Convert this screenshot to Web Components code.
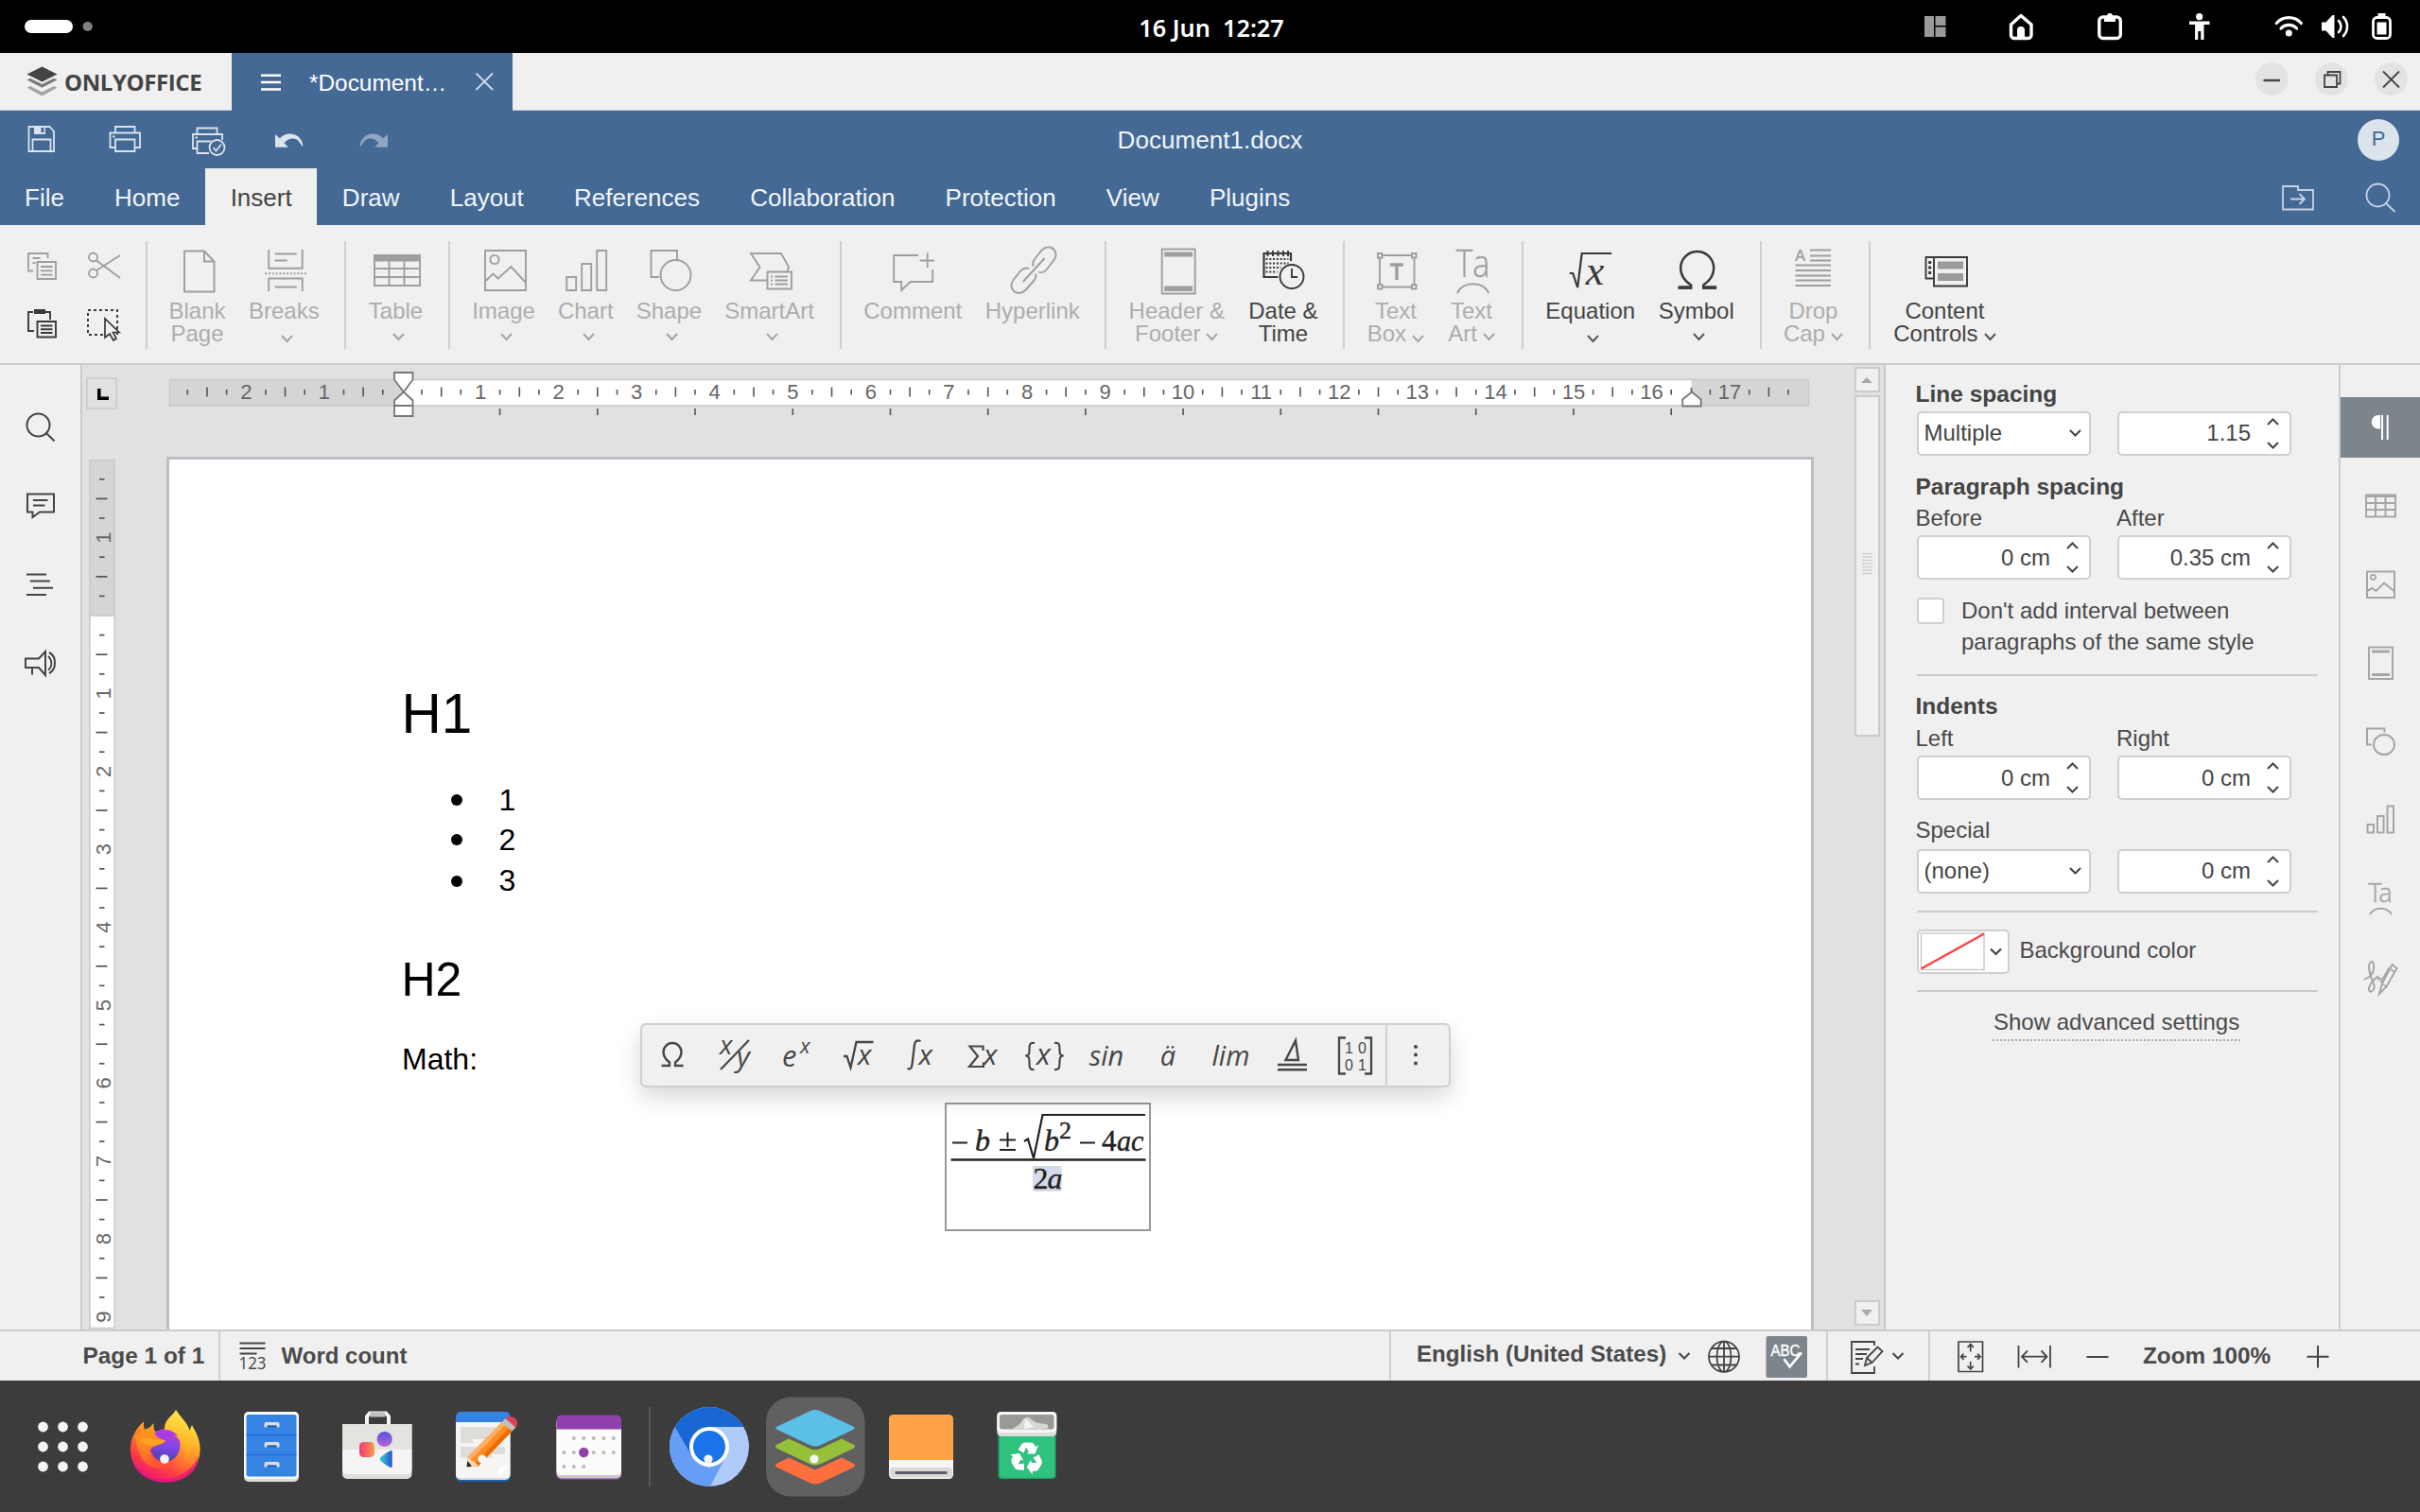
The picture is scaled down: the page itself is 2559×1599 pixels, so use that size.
<!DOCTYPE html>
<html lang="en">
<head>
<meta charset="utf-8">
<title>Document1.docx</title>
<style>
html,body{margin:0;height:100%;overflow:hidden;background:#f0f0f0}
body{font-family:"Liberation Sans",Arial,sans-serif}
</style>
</head>
<body>
<office-desktop></office-desktop>
<script>
/* ---------- helpers ---------- */
const define = (name, css, html) => customElements.define(name, class extends HTMLElement {
  constructor() {
    super();
    const body = typeof html === 'function' ? html(this) : html;
    this.attachShadow({mode: 'open'}).innerHTML = `<style>*{box-sizing:border-box}:host{display:block;box-sizing:border-box}svg{display:block;overflow:visible;flex:none}${css}</style>${body}`;
  }
});
/* horizontal run: items are [x, y, width, html], spaced with margins */
const row = (x0, y0, items) => {
  let c = x0;
  return items.map(([x, y, w, h]) => {
    const s = `<div style="flex:none;margin:${(y - y0).toFixed(2)}px 0 0 ${(x - c).toFixed(2)}px;width:${w}px">${h}</div>`;
    c = x + w; return s;
  }).join('');
};
/* vertical run: items are [y, height, html] */
const col = (y0, items) => {
  let c = y0;
  return items.map(([y, h, s]) => {
    const r = `<div style="margin-top:${(y - c).toFixed(2)}px;height:${h}px">${s}</div>`;
    c = y + h; return r;
  }).join('');
};
const svg = (x, y, w, h, body, color = '#444', sw = 2) =>
  `<svg width="${w}" height="${h}" viewBox="${x} ${y} ${w} ${h}" fill="none" stroke="${color}" stroke-width="${sw}">${body}</svg>`;
const icon = (x, y, w, h, body, color, sw) => [x, y, w, svg(x, y, w, h, body, color, sw)];
/* text line placed by baseline */
const text = (x, base, w, size, str, css = '') =>
  [x, base - size * .9465, w, `<div style="font-size:${size}px;line-height:${size * 1.2}px;white-space:pre;${css}">${str}</div>`];
const chev = (cx, cy, s = 5.5, up = false) => up
  ? `<path d="M${cx - s} ${cy + 3}l${s} -5.5l${s} 5.5"/>` : `<path d="M${cx - s} ${cy - 3}l${s} 5.5l${s} -5.5"/>`;

/* ---------- system bar ---------- */
define('system-bar', `:host{height:56px;background:#000;display:flex;align-items:flex-start;color:#fff}`, row(0, 0, [
  icon(26, 21, 51, 14, `<rect x="26" y="21" width="51" height="14" rx="7" fill="#fff" stroke="none"/>`),
  icon(87, 23, 11, 10, `<ellipse cx="92.7" cy="28" rx="5.2" ry="5" fill="#808080" stroke="none"/>`),
  [1181, 12.5, 200, `<div style="font:600 25.3px/32px 'Noto Sans','Open Sans',sans-serif;text-align:center;white-space:pre">16 Jun  12:27</div>`],
  icon(2035, 17, 23, 22, `<g fill="#9a9a9a" stroke="none"><path d="M2035 17h10v22h-10z"/><path d="M2046.500 17h11v10h-11zM2046.500 28.500h11v10.500h-11z"/></g>`),
  icon(2124, 14, 26, 29, `<path d="M2126.500 26L2137 16.500 2148 26V37a3.500 3.500 0 0 1-3.500 3.500h-14.500a3.500 3.500 0 0 1-3.500-3.500z" stroke-linejoin="round"/><path d="M2133 40.500V32a4 4 0 0 1 8 0v8.500z" fill="#fff" stroke="none"/>`, '#fff', 3.4),
  icon(2218, 14, 26, 29, `<rect x="2219.800" y="18" width="22.500" height="22.500" rx="4"/><path d="M2225 23v-4a2 2 0 0 1 2-2h1a3 3 0 0 1 6 0h1a2 2 0 0 1 2 2v4z" fill="#fff" stroke="none"/>`, '#fff', 3.4),
  icon(2314, 14, 23, 29, `<circle cx="2325.700" cy="17.700" r="3.600" fill="#fff" stroke="none"/><path d="M2315 22.500h21.500v3.500h-6v16h-3.200v-9h-3v9h-3.200v-16h-6z" fill="#fff" stroke="none"/>`),
  icon(2405, 16, 30, 23, `<path d="M2407.300 24.500a17.500 17.500 0 0 1 26 0M2412 30a11.500 11.500 0 0 1 16.600 0" stroke-linecap="round"/><circle cx="2420.300" cy="35" r="3.500" fill="#fff" stroke="none"/>`, '#fff', 3.2),
  icon(2454, 16, 30, 24, `<path d="M2455 23.500h4.500l7-7.500h2v24h-2l-7-7.500h-4.500z" fill="#fff" stroke="none"/><path d="M2473 22a8.500 8.500 0 0 1 0 12M2478 18a14.500 14.500 0 0 1 0 20" stroke-linecap="round"/>`, '#fff', 2.6),
  icon(2508, 14, 21, 28, `<rect x="2509.500" y="18.500" width="18" height="22" rx="4"/><path d="M2514.500 18v-4h8v4zM2513.500 23.500h10v13h-10z" fill="#fff" stroke="none"/>`, '#fff', 2.8),
]));

/* ---------- window title bar with document tab ---------- */
define('window-bar', `:host{height:61px;background:#f0f0f0;display:flex;align-items:flex-start;border-bottom:1px solid #c9d3de}
.tab{display:flex;align-items:flex-start;width:297.500px;height:61px;background:#446995;color:#fff}`, row(0, 56, [
  icon(28, 70, 33, 32, `<g stroke="none"><path d="M44.500 70.500L60.500 78.500 44.500 86.500 28.500 78.500z" fill="#444"/><path d="M28.500 84.500l3.500-1.800 12.500 6.200 12.500-6.200 3.500 1.800-16 8.200z" fill="#7b7b7b"/><path d="M28.500 92.800l3.500-1.800 12.500 6.200 12.500-6.200 3.500 1.800-16 8.700z" fill="#a5a5a5"/></g>`),
  text(68, 95.5, 150, 24, 'ONLYOFFICE', `font-family:'Open Sans',sans-serif;font-weight:700;color:#444;letter-spacing:-.4px`),
  [244.5, 56, 297.5, `<div class="tab">` + row(244.5, 56, [
    icon(276, 78, 21, 18, `<path d="M276 79.700h21M276 87h21M276 94.500h21"/>`, '#fff', 2.4),
    text(327, 96.5, 160, 24.4, '*Document…'),
    icon(503, 77, 19, 19, `<path d="M503.500 77.500l17.500 17.500M521 77.500L503.500 95"/>`, '#d5deea', 1.8),
  ]) + `</div>`],
  icon(2384, 66, 36, 36, `<circle cx="2402.300" cy="83.700" r="17.500" fill="#e3e3e3" stroke="none"/><path d="M2393.500 85h17.500"/>`, '#444', 2.4),
  icon(2447, 66, 36, 36, `<circle cx="2465.300" cy="83.700" r="17.500" fill="#e3e3e3" stroke="none"/><path d="M2458 79.500h13v12.500h-13zM2461.500 79.500v-3.500h13v12.500h-3.500"/>`, '#444', 1.8),
  icon(2510, 66, 36, 36, `<circle cx="2528.300" cy="83.700" r="17.500" fill="#e3e3e3" stroke="none"/><path d="M2520 75.500l17 17M2537 75.500l-17 17"/>`, '#444', 1.8),
]));

/* ---------- blue header ---------- */
define('app-header', `:host{height:121px;background:#446995;color:#f1f5f9}
.quick,.tabs{display:flex;align-items:flex-start}.quick{height:61px}.tabs{height:60px;font-size:26px;line-height:60px;padding-right:0}
.tabs span{padding:9px 26.600px 0;line-height:44px;height:60px;white-space:pre}.tabs span:first-child{padding-left:26px}
.tabs .on{background:#f0f0f0;color:#444}.ico{flex:1;display:flex;align-items:flex-start;justify-content:flex-end;gap:55px;padding:14px 26px 0 0}
.av{width:44px;height:44px;border-radius:50%;background:#dbe3ed;color:#446995;font-size:22px;line-height:42px;text-align:center}`,
`<div class="quick">` + row(0, 117, [
  icon(29, 132, 30, 30, `<path d="M30.500 134h22l4.500 5v21h-26.500z"/><path d="M36 134h12v8h-12z" fill="#dbe3ed" stroke="none"/><path d="M43.500 135h3v5h-3z" fill="#446995" stroke="none"/><path d="M34.500 160v-12.500h19V160"/>`, '#dbe3ed', 1.8),
  icon(115, 132, 35, 30, `<path d="M122 140.500v-6.500h20.500v6.500M122 156h-5.500v-15.500h31.500V156h-5.500M122 147.500h20.500V160H122z"/><path d="M119 143.500h2.500v2h-2.500z" fill="#dbe3ed" stroke="none"/>`, '#dbe3ed', 1.8),
  icon(203, 134, 37, 32, `<path d="M208.500 142v-6.500h21v6.500M208.500 157h-4.500v-15h31V148M221 162h-12.500v-12.500h15"/><path d="M206.500 144.500h2.500v2h-2.500z" fill="#dbe3ed" stroke="none"/><circle cx="229.500" cy="156" r="8"/><path d="M225.500 156l3 3.500 5.500-7"/>`, '#dbe3ed', 1.8),
  icon(291, 141, 30, 15, `<path d="M291 142v13.700h14l-4.500-4.500c4-5 12-7 16-1 1.500 2 2.500 4 4 5C320 145 312 141 305.500 141.500c-4 .3-8 2.500-9.500 5z" fill="#dbe3ed" stroke="none"/>`),
  icon(380, 141, 30, 15, `<path d="M410 142v13.700h-14l4.500-4.500c-4-5-12-7-16-1-1.500 2-2.500 4-4 5C381 145 389 141 395.500 141.500c4 .3 8 2.500 9.500 5z" fill="#8fa5c0" stroke="none"/>`),
  text(1129.5, 157.5, 300, 26.1, 'Document1.docx', 'text-align:center'),
  [2493, 125.7, 44, `<div class="av">P</div>`],
]) + `</div><div class="tabs"><span>File</span><span>Home</span><span class="on">Insert</span><span>Draw</span><span>Layout</span><span>References</span><span>Collaboration</span><span>Protection</span><span>View</span><span>Plugins</span>
<div class="ico">${svg(2413, 192, 34, 32, `<path d="M2414 197h16v4h16v20.500h-32z"/><path d="M2422 210.500h14M2431.500 205l5.500 5.500-5.500 5.500"/>`, '#c7d3e1', 1.8)}${svg(2502, 192, 31, 32, `<circle cx="2514.500" cy="206.500" r="12"/><path d="M2523 215l9.500 9"/>`, '#c7d3e1', 1.8)}</div></div>`);

/* ---------- ribbon ---------- */
const G = '#9e9e9e', K = '#3a3a3a', BL = 255;
define('ribbon-button', `:host{text-align:center;font-size:24px;line-height:24.400px;white-space:nowrap;color:#adadad;height:115px}
:host([on]){color:#444}.l{margin:0 -20px 0 -21px}`, `<slot name="icon"></slot><div class="l"><slot></slot></div>`);
const cv = (dy, c) => `<svg width="13" height="8" viewBox="0 0 13 8" fill="none" stroke="${c}" stroke-width="2" style="display:inline-block;margin-left:6px;vertical-align:${dy}px"><path d="M1 1l5.500 6L12 1"/></svg>`;
const rb = (cx, w, label, art, on) => [cx - w / 2, BL, w,
  `<ribbon-button ${on ? 'on' : ''}><svg slot="icon" style="display:block;overflow:visible" width="${w}" height="62" viewBox="${cx - w / 2} 255 ${w} 62" fill="none" stroke="${on ? K : G}" stroke-width="1.9">${art}</svg>${label}</ribbon-button>`];
const sep = x => [x - 1, 255, 2, `<div class="sep"></div>`];
define('tool-ribbon', `:host{height:148px;background:#f0f0f0;border-bottom:2px solid #cbcbcb;display:flex;align-items:flex-start}
.sep{height:114px;background:#cfcfcf}`, row(0, 238, [
  [28, 266, 34, col(266, [
    [266, 31, svg(28, 266, 34, 31, `<path d="M35 286.500h-5v-18.500h20.500v5M34.500 273h8M34.500 278h3"/><path d="M39.500 277h19.500v18h-19.500zM43 282h12.500M43 286.300h12.500M43 290.600h12.500"/>`, G, 1.8)],
    [326, 32, svg(28, 326, 34, 32, `<path d="M36 350h-6V330h5M48 330h5v8"/><path d="M36 327h12v5h-12z" fill="${K}" stroke="none"/><path d="M39.500 340h19.500v16.500h-19.500zM43 344.500h12.500M43 348.300h12.500M43 352h12.500"/>`, K, 1.9)]])],
  [92, 266, 37, col(266, [
    [266, 31, svg(92, 266, 37, 31, `<circle cx="98.500" cy="272" r="4.500"/><circle cx="98.500" cy="289" r="4.500"/><path d="M102 275.500L127 294M102 286L127 270"/>`, G, 1.8)],
    [326, 35, svg(92, 326, 37, 35, `<path d="M93 328h31v26h-31z" stroke-dasharray="3 3"/><path d="M111 337v20l5-4 4 7 3-2-3.500-6.500h6.500z" fill="#f0f0f0" stroke-width="1.700"/>`, K, 2)]])],
  sep(155),
  rb(209, 60, 'Blank<br>Page', `<path d="M195 265.500h21l10.500 11v32h-31.500zM216 265.500v11h10.500"/>`),
  rb(300.8, 76, `Breaks<br>${cv(-1, '#a5a5a5')}`, `<path d="M284 264v19.800h35.500V264M290.500 268.500h23M290.500 275.500h13M284 308v-13.500h35.500V308M290.500 303.500h23"/><path d="M280 289.300h44" stroke-dasharray="2 1.800"/>`),
  sep(365),
  rb(419, 60, `Table<br>${cv(1, '#a5a5a5')}`, `<path d="M396 270h48v32h-48zM396 284h48M396 293h48M411.500 276v26M427.500 276v26"/><path d="M395.500 269.500h49v7h-49z" fill="${G}" stroke="none"/>`),
  sep(475.5),
  rb(533, 70, `Image<br>${cv(1, '#a5a5a5')}`, `<path d="M513 265h43v42h-43zM513 297.500l8.500-8 5 5 14-12.500 15.500 17"/><circle cx="523" cy="274.500" r="4.600"/>`),
  rb(619.8, 66, `Chart<br>${cv(1, '#a5a5a5')}`, `<path d="M599 293h10v14h-10zM615 279h10v28h-10zM631 265h10v42h-10z"/>`),
  rb(708, 76, `Shape<br>${cv(1, '#a5a5a5')}`, `<path d="M697 293h-8.500v-28h27.500v9"/><circle cx="714.500" cy="291" r="16"/>`),
  rb(814, 96, `SmartArt<br>${cv(1, '#a5a5a5')}`, `<path d="M811 296.500h-17l9.500-14-9.500-14.500h32l8 14-1.500 5"/><path d="M811.500 287.500h25.500v18h-25.500zM819.500 292.500h13.500M819.500 296.500h13.500M819.500 300.500h13.500M815 292.500h2M815 296.500h2M815 300.500h2"/>`),
  sep(889),
  rb(965.8, 106, 'Comment', `<path d="M971 270h-26v28h8v9l9.500-9H986V285"/><path d="M980.500 267.500v15.500M972.500 275.500h15.500"/>`),
  rb(1092.3, 102, 'Hyperlink', `<path d="M1092.500 281.500C1092 277 1093 275.500 1095 273L1102 264.500C1107 259.500 1114 261 1116 266 1118 270 1116.500 273 1114 276L1107 285C1104.500 288 1102 289 1098.500 287.500"/><path d="M1088.500 284C1084 282.500 1081.500 284 1079 287L1072 296C1069 300 1069 304 1072 307.500 1076 311 1081 310.500 1085 306.500L1093 297.500C1096 294 1096.500 292 1095.500 289.500M1082 298L1105 273"/>`),
  sep(1169),
  rb(1244.8, 104, `Header &amp;<br>Footer${cv(1, '#a5a5a5')}`, `<path d="M1228.500 263.500h35v47h-35z"/><path d="M1231 266.500h30v5h-30zM1231 302.500h30v5.500h-30z" fill="${G}" stroke="none"/>`),
  rb(1357.5, 76, `Date &amp;<br>Time`, `<path d="M1352 293h-15v-25h28.500v8" stroke-width="2.200"/><path d="M1341 265v6M1346.500 265v6M1352 265v6M1357.500 265v6M1362.500 265v6"/><path d="M1339 274h24M1339 278.500h24M1339 283h16M1339 287.500h12" stroke-dasharray="2 1.800" stroke-width="2"/><circle cx="1366.500" cy="292.500" r="12.500"/><path d="M1366.500 284v9h6"/>`, 1),
  sep(1421),
  rb(1476.5, 64, `Text<br>Box${cv(-1, '#a5a5a5')}`, `<path d="M1462 270h31M1462 303.500h31M1459.500 273v28M1496 273v28M1457.500 268h4.500v4.500h-4.500zM1493.500 268h4.500v4.500h-4.500zM1457.500 301h4.500v4.500h-4.500zM1493.500 301h4.500v4.500h-4.500z"/><path d="M1470.500 280h14M1477.500 280v16" stroke-width="3.400"/>`),
  rb(1556.6, 62, `Text<br>Art${cv(1, '#a5a5a5')}`, `<text x="1557" y="293" text-anchor="middle" font-family="Open Sans,Noto Sans,sans-serif" font-weight="300" font-size="40" textLength="36" lengthAdjust="spacingAndGlyphs" fill="${G}" stroke="${G}" stroke-width=".4">Ta</text><path d="M1540.500 310c6-13 27-13 33.500 0"/>`),
  sep(1610),
  rb(1682.3, 100, `Equation<br>${cv(-1, '#555')}`, `<path d="M1660 289h3.500l5 15 4.500-36h31.500" stroke-width="2.200"/><text x="1677" y="301" font-family="Liberation Serif,serif" font-style="italic" font-size="44" fill="${K}" stroke="none">x</text>`, 1),
  rb(1794.3, 90, `Symbol<br>${cv(1, '#555')}`, `<path d="M1775 304.500h13.500v-3c-6-4-11-9-11-18a17.500 17.500 0 0 1 35 0c0 9-5 14-11 18v3h13.500" stroke-width="2.500"/><path d="M1775 304h14M1800.500 304h15" stroke-width="3.600"/>`, 1),
  sep(1862),
  rb(1918, 66, `Drop<br>Cap${cv(1, '#a5a5a5')}`, `<path d="M1914 264.500h22M1914 270.500h22M1914 275.500h22M1898.500 280.500h37.500M1898.500 286h37.500M1898.500 291.500h37.500M1898.500 296.500h37.500M1898.500 302h37.500"/><text x="1898" y="276" font-family="Open Sans,sans-serif" font-weight="600" font-size="17" fill="${G}" stroke="none">A</text>`),
  sep(1977),
  rb(2057, 110, `Content<br>Controls${cv(1, '#555')}`, `<path d="M2045 272h35v30.500h-35zM2045 272h-8.500v22.500h8.500"/><path d="M2049 276.500h27v8h-27zM2049 289h27v8h-27z" fill="#9b9b9b" stroke="none"/><path d="M2040.700 276v14" stroke-width="3" stroke-dasharray="3 2.500"/>`, 1),
]));

/* ---------- left rail ---------- */
define('left-rail', `:host{width:87px;background:#f0f0f0;border-right:2px solid #cbcbcb;padding-left:26px}`, col(386, [
  [437, 30, svg(26, 437, 34, 30, `<circle cx="40.500" cy="449.500" r="12"/><path d="M48.500 457.500l9 9"/>`)],
  [521, 28, svg(26, 521, 34, 28, `<path d="M29 522.500h28v19H42l-7.500 5.500v-5.500H29zM35 529h15.500M35 534.500h12.500"/>`)],
  [606, 24, svg(26, 606, 34, 24, `<path d="M28 607.500h21M31.800 614.600h21M35 621.800h21M28 629h21"/>`)],
  [687, 28, svg(26, 687, 34, 28, `<path d="M27 696.500h14l7-7.500v25l-7-8H27zM34 706v7.500M52 690c8 4 8 18 0 22"/><path d="M51 694c4.500 4 4.500 11 0 14.500" stroke-width="1.800"/>`)],
]));

/* ---------- rulers ---------- */
const Z = 425.4, U = 82.57, VZ = 651;
const hr = () => {
  let s = `<rect x="179.500" y="401.500" width="1733" height="27.500" fill="#d5d5d5" stroke="#c9c9c9" stroke-width="1.500"/><rect x="426.400" y="402.200" width="1362.300" height="26" fill="#fff" stroke="none"/>`;
  for (let q = -11; q <= 71; q++) {
    const x = (Z + q * U / 4).toFixed(1);
    if (q === 0 || q === 66) continue;
    if (q % 4 === 0) s += `<text x="${x}" y="421.500" text-anchor="middle" font-size="22" fill="#666" stroke="none">${Math.abs(q / 4)}</text>`;
    else s += q % 2 === 0 ? `<path d="M${x} 409.500v10"/>` : `<path d="M${x} 412v5.500"/>`;
  }
  for (let t = 1; t <= 13; t++) s += `<path d="M${(Z + t * U * 1.25).toFixed(1)} 432v7"/>`;
  s += `<path d="M1788.500 410v6"/><g fill="#fff" stroke="#777" stroke-width="1.800"><path d="M417 394h19.500v7.500l-9.700 13-9.800-13z"/><path d="M426.800 414.500l9.700 9v16.500H417v-16.500zM417 429h19.500"/><path d="M1789 414.500l9.700 8v7h-19.500v-7z"/></g>`;
  return svg(176, 386, 1742, 97, s, '#555', 1.6);
};
define('ruler-horizontal', `:host{height:97px}`, hr);
define('ruler-vertical', `:host{height:920px;overflow:hidden}`, () => {
  let s = `<rect x="95" y="486.500" width="26" height="165" fill="#d5d5d5" stroke="#c9c9c9" stroke-width="1.500"/><rect x="95" y="651" width="26" height="753.500" fill="#fff" stroke="#c9c9c9" stroke-width="1.500"/>`;
  for (let q = -7; q <= 36; q++) {
    const y = (VZ + q * U / 4 * .998).toFixed(1);
    if (q === 0) continue;
    if (q % 4 === 0) s += `<text transform="translate(116.800 ${y}) rotate(-90)" text-anchor="middle" font-size="22" fill="#666" stroke="none">${Math.abs(q / 4)}</text>`;
    else s += q % 2 === 0 ? `<path d="M101.500 ${y}h12"/>` : `<path d="M105 ${y}h5.500"/>`;
  }
  return svg(87, 486, 89, 920, s, '#555', 1.7);
});

/* ---------- equation toolbar and equation ---------- */
const M = '#474747';
const it = (cx, size, str, w = 60, base = 1127.7) => [cx - w / 2, base - size * 1.03, w, `<div style="font:italic 400 ${size}px/${size * 1.3}px 'Open Sans','Noto Sans',sans-serif;text-align:center;white-space:nowrap">${str}</div>`];
const st = (x, y, s, size, extra = '') => `<text x="${x}" y="${y}" font-family="Open Sans,Noto Sans,sans-serif" font-style="italic" font-size="${size}" fill="${M}" stroke="none" ${extra}>${s}</text>`;
define('equation-toolbar', `:host{position:absolute;left:590px;top:696px;width:857px;height:68px;background:#f0f0f0;border:2px solid #cfcfcf;border-radius:6px;box-shadow:0 10px 24px rgba(0,0,0,.16);display:flex;align-items:flex-start;color:${M}}.d{height:64px;background:#cfcfcf}`, row(679, 1084.5, [
  icon(698, 1098, 26, 34, `<path d="M699.500 1127h8.500v-3.500c-4-3-6.500-6-6.500-11a9.500 9.500 0 0 1 19 0c0 5-2.500 8-6.500 11v3.500h8.500"/>`, M, 2.4),
  icon(757, 1096, 40, 42, st(761, 1114.5, 'x', 28) + st(779, 1127.5, 'y', 30) + `<path d="M792 1100l-30 31"/>`, M, 2.2),
  icon(822, 1096, 40, 42, st(827, 1127.7, 'e', 31) + st(846, 1114, 'x', 22)),
  icon(887, 1096, 40, 42, st(907, 1126, 'x', 30) + `<path d="M892 1117h3.500l4 12 6-27h18"/>`, M, 2.3),
  icon(955, 1096, 40, 42, st(971.5, 1126, 'x', 30) + `<path d="M973.500 1101c-4-1.500-6 0-6.500 4l-2.500 21c-.5 4-2 5-5 4"/>`, M, 2.3),
  icon(1019, 1096, 40, 42, st(1040, 1126, 'x', 30) + `<path d="M1039.500 1111v-4.500h-14l8.500 10.500-9 11h15v-4.500"/>`, M, 2.2),
  icon(1080, 1096, 48, 42, st(1096, 1125.5, 'x', 31) + `<path d="M1094 1103c-6-1-5.500 3-5.500 8s-1 5-4 5.500c3 .5 4 1 4 6s-.5 9 5 8.500M1115 1103c6-1 5.500 3 5.500 8s1 5 4 5.500c-3 .5-4 1-4 6s.5 9-5.500 8.500"/>`, M, 2.2),
  it(1170, 29, 'sin'), it(1235, 29, 'ä', 50), it(1301.5, 29, 'lim'),
  icon(1350, 1096, 34, 42, `<path d="M1359.500 1121L1370 1100.500l3 20.500z"/><path d="M1351 1126h31M1351 1131.300h31"/>`, M, 2.4),
  icon(1414, 1094, 38, 44, `<path d="M1423 1097.500h-7v38h7M1443 1097.500h7v38h-7"/><g font-family="Liberation Sans,sans-serif" font-size="16" fill="${M}" stroke="none"><text x="1422" y="1113.500">1</text><text x="1436" y="1113.500">0</text><text x="1422" y="1131.500">0</text><text x="1436" y="1131.500">1</text></g>`, M, 2.3),
  [1465, 1084.5, 2, `<div class="d"></div>`],
  icon(1494, 1104, 6, 24, `<g fill="#444" stroke="none"><circle cx="1497" cy="1107" r="2"/><circle cx="1497" cy="1115.500" r="2"/><circle cx="1497" cy="1124.500" r="2"/></g>`),
]));
define('math-equation', `:host{width:218px;height:136px;border:2px solid #999;margin-left:820px}`, () => {
  const t = (x, y, w, s, i, z = 32) => `<text x="${x}" y="${y}" font-family="Liberation Serif,serif" ${i ? 'font-style="italic"' : ''} font-size="${z}" fill="#222" stroke="#222" stroke-width=".4" ${w ? `textLength="${w}" lengthAdjust="spacingAndGlyphs"` : ''}>${s}</text>`;
  return svg(1001, 1168, 214, 132, `<rect x="1092" y="1233" width="30.500" height="27" fill="#d5dbea" stroke="none"/>`
    + `<path d="M1007 1208.500h16M1142 1208.500h16M1057 1205.500h17M1065.500 1197.500v15.500M1057 1216h17" stroke-width="2"/>` + t(1031, 1216.5, 0, 'b', 1)
    + `<path d="M1083 1207l4-2.500 6 20.500 9.500-46h108.500" stroke-width="2.200"/><path d="M1005.500 1226.500h206" stroke-width="2.500"/>`
    + t(1104, 1216.5, 0, 'b', 1) + t(1120, 1204, 0, '2', 0, 26) + t(1165, 1216.5, 0, '4', 0, 31) + t(1181, 1216.5, 28.5, 'ac', 1) + t(1092.5, 1257.3, 0, '2', 0) + t(1107.5, 1257.3, 0, 'a', 1), '#222');
});

/* ---------- document canvas ---------- */
const dt = (x, base, size, s) => [base - size * .9465, size * 1.2, `<div style="margin-left:${x - 179}px;font-size:${size}px;line-height:${size * 1.2}px">${s}</div>`];
const li = (base, n) => [base - 36, 42, `<div class="li"><i></i><span>${n}</span></div>`];
define('doc-canvas', `:host{flex:none;width:1905px;height:1020px;background:#e1e1e1;display:flex;position:relative;overflow:hidden;color:#000}
.l{width:89px;flex:none}.corner{width:33px;height:34px;border:2px solid #cfcfcf;margin:12.500px 0 53.500px 4px}.corner svg{margin:10px 0 0 10px}
.m{width:1742px;flex:none}.page{height:924px;background:#fff;border:3px solid #bcbec4;border-bottom:0}
.li{display:flex;height:42px}.li i{width:12px;height:12px;border-radius:50%;background:#000;margin:19.500px 0 0 298px}.li span{font-size:32px;line-height:50px;margin-left:38.500px}
.s{width:74px;padding:2px 0 0 42.500px}.b{width:27px;border:2px solid #cbcbcb;background:#f0f0f0;display:flex;justify-content:center;align-items:center}`,
`<div class="l"><div class="corner"><svg width="12" height="12"><path d="M1.800 0v10.200H12" fill="none" stroke="#000" stroke-width="3.600"/></svg></div><ruler-vertical></ruler-vertical></div>
<div class="m"><ruler-horizontal></ruler-horizontal><div class="page">${col(486, [
  dt(424.5, 775, 58.5, 'H1'), li(857, 1), li(899, 2), li(942.5, 3), dt(424.5, 1053.3, 50, 'H2'), dt(425, 1131.3, 32, 'Math:'),
  [1166, 136, '<math-equation></math-equation>'],
])}</div></div>
<div class="s"><div class="b" style="height:27px"><svg width="12" height="6"><path d="M0 6L6 0l6 6z" fill="#aaa"/></svg></div><div class="b" style="height:361px;margin-top:3px"><svg width="11" height="24" stroke="#cfcfcf" stroke-width="1.500" style="margin-top:-6px"><path d="M0 1.500h11M0 5h11M0 8.500h11M0 12h11M0 15.500h11M0 19h11M0 22.500h11"/></svg></div>
<div class="b" style="height:27px;margin-top:596px"><svg width="12" height="7"><path d="M0 0h12l-6 7z" fill="#aaa"/></svg></div></div>
<equation-toolbar></equation-toolbar>`);

/* ---------- settings panel ---------- */
const fieldCss = `:host{width:184.500px;height:47px;border:2px solid #cfcfcf;border-radius:5px;background:#fff;display:flex;align-items:center;font-size:24px;color:#444}`;
define('select-field', fieldCss + `:host{padding:0 8px 0 6px;justify-content:space-between}`, `<slot></slot><svg width="13" height="8" fill="none" stroke="#444" stroke-width="2"><path d="M1 1l5.500 5.500L12 1"/></svg>`);
define('number-field', fieldCss + `:host{justify-content:flex-end;padding:0 11px 0 0}.a{display:flex;flex-direction:column;gap:17px;margin-left:17px}`, `<span><slot></slot></span><div class="a"><svg width="13" height="8" fill="none" stroke="#444" stroke-width="2"><path d="M1 7l5.500-5.500L12 7"/></svg><svg width="13" height="8" fill="none" stroke="#444" stroke-width="2"><path d="M1 1l5.500 5.500L12 1"/></svg></div>`);
const ln = (base, str) => [base - 22.7, 28.8, `<div class="t">${str}</div>`];
const two = (y, a, b) => [y, 47, `<div class="two">${a}${b}</div>`];
define('settings-panel', `:host{flex:none;width:481px;background:#f0f0f0;border-left:2px solid #cbcbcb;padding-left:32.500px;font-size:24px;color:#4a4a4a}
.t,.labels{line-height:28.800px;white-space:pre;margin-left:-1px}.labels span{display:inline-block;width:212.500px}.labels span+span{width:auto}b{color:#444;font-size:24.500px}
.two{display:flex;gap:27.500px}hr{border:0;margin:0;height:2px;width:424px;background:#cbcbcb}
.chk{display:flex;line-height:33px}.chk i{width:29px;height:28px;border:2px solid #cfcfcf;border-radius:4px;background:#fff;margin:3px 18.500px 0 0}
.bg{display:flex;align-items:center}.bg span{margin-top:-3px}.sw{width:98px;height:47px;border:2px solid #cfcfcf;border-radius:5px;background:#fff;display:flex;align-items:center;margin-right:11px}
.adv{display:inline-block;line-height:32px;margin-left:80.500px;border-bottom:2px dotted #aaa;padding:0 1px 2px}`, col(386, [
  ln(425.5, '<b>Line spacing</b>'), two(435, '<select-field>Multiple</select-field>', '<number-field>1.15</number-field>'),
  ln(523.5, '<b>Paragraph spacing</b>'), [534.3, 28.8, '<div class="labels"><span>Before</span><span>After</span></div>'],
  two(566.2, '<number-field>0 cm</number-field>', '<number-field>0.35 cm</number-field>'),
  [629.5, 68, `<div class="chk"><i></i><span>Don't add interval between<br>paragraphs of the same style</span></div>`],
  [713.5, 2, '<hr>'], ln(756, '<b>Indents</b>'), [766.6, 28.8, '<div class="labels"><span>Left</span><span>Right</span></div>'],
  two(799.3, '<number-field>0 cm</number-field>', '<number-field>0 cm</number-field>'),
  ln(887, 'Special'), two(897.7, '<select-field>(none)</select-field>', '<number-field>0 cm</number-field>'),
  [963.5, 2, '<hr>'],
  [983, 47, `<div class="bg"><div class="sw"><svg width="92" height="43" fill="none"><path d="M2.500 2h66.500v38.500H2.500z" stroke="#cbcbcb" stroke-width="1.500"/><path d="M2.500 39.500L69 2.500" stroke="#f44" stroke-width="2.400"/><path d="M76 18.500l5.500 5.500 5.500-5.500" stroke="#444" stroke-width="2.200"/></svg></div><span>Background color</span></div>`],
  [1047.5, 2, '<hr>'], [1065, 36, '<span class="adv">Show advanced settings</span>'],
]));

/* ---------- right rail ---------- */
const R = '#a6a6a6';
const ri = (y, h, body) => [y, h, svg(2498, y, 38, h, body, R, 2)];
define('right-rail', `:host{flex:none;width:86px;background:#f0f0f0;border-left:2px solid #cbcbcb}svg{margin-left:23px}.on{height:64px;background:#7d858c;padding-top:17px}`, col(386, [
  [420, 64, `<div class="on">${svg(2498, 437, 38, 29, `<path d="M2527 439h-12a7 7 0 0 0 0 14.500h2V439z" fill="#fff" stroke="none"/><path d="M2519 439v26M2524.700 439v26" stroke="#fff"/>`)}</div>`],
  ri(522, 26, `<path d="M2502 524h31v22.500h-31zM2502 532h31M2502 539h31M2512 526v20M2522.500 526v20"/><path d="M2501 522.500h33v3.500h-33z" fill="${R}" stroke="none"/>`),
  ri(603, 30, `<path d="M2503 604.500h29v27.500h-29zM2503 625l5.500-3 4 3 8.500-8.500 10.500 8.500"/><circle cx="2509.500" cy="610.500" r="2.600" stroke-width="1.600"/>`),
  ri(683, 36, `<path d="M2505 684.500h25v33.500h-25z"/><path d="M2508 689h19M2508 713.500h19" stroke-width="3"/>`),
  ri(769, 30, `<path d="M2508 787.500h-5v-17h18.500v4"/><ellipse cx="2521" cy="787.500" rx="11" ry="10.500"/>`),
  ri(851, 31, `<path d="M2503.500 872h6.500v8.500h-6.500zM2514 863h6.500v17.500h-6.500zM2524.500 852.500h6.500v28h-6.500z"/>`),
  ri(932, 37, `<text x="2517" y="953.500" text-anchor="middle" font-family="Open Sans,Noto Sans,sans-serif" font-weight="300" font-size="27" fill="${R}" stroke="${R}" stroke-width=".5" textLength="25">Ta</text><path d="M2506 967c5-8.500 18-8.500 23 0"/>`),
  ri(1015, 38, `<path d="M2500 1036l7-4c3-4 4-9 2.500-14-2-2-4.500 0-4.500 4 0 8 4 16 5.500 20 1 5-3 8-5 6-2-3 2-9 7-14l2-1 1 3 3-2" stroke-width="2"/><path d="M2516 1051l3-11 10.500-20 5 4-11 19.500z" stroke-width="2"/><path d="M2528 1025l4.500 3.500M2519 1040l5 4M2526.500 1023l-9 16" stroke-width="1.600"/>`),
]));

/* ---------- status bar ---------- */
const sd = x => [x - 1, 1407.5, 2, `<div class="d"></div>`];
define('status-bar', `:host{height:54px;background:#f0f0f0;border-top:2px solid #cbcbcb;display:flex;align-items:flex-start;font-weight:700;color:#4a4a4a}.d{height:52.500px;background:#cfcfcf}`, row(0, 1408, [
  text(87.5, 1442.3, 134, 24.4, 'Page 1 of 1'), sd(231.5),
  icon(253, 1418, 28, 32, `<path d="M253.500 1420.500h27M253.500 1426h27M253.500 1431.500h18" stroke-width="2.200"/><text x="252.500" y="1448.300" font-family="Open Sans,sans-serif" font-weight="500" font-size="18.500" fill="#444" stroke="none" textLength="29" lengthAdjust="spacingAndGlyphs">123</text>`),
  text(297.5, 1442.3, 200, 24, 'Word count'), sd(1469.5),
  text(1498, 1441, 267, 24.15, 'English (United States)'),
  icon(1773, 1427, 16, 14, chev(1781, 1434)),
  icon(1805, 1417, 36, 36, `<circle cx="1823" cy="1434.700" r="16"/><ellipse cx="1823" cy="1434.700" rx="7.500" ry="16"/><path d="M1823 1419v32M1807 1434.700h32M1809.500 1426h27M1809.500 1443.500h27"/>`, '#444', 1.8),
  icon(1867.5, 1412.7, 43.5, 44, `<rect x="1867" y="1412.700" width="43.500" height="44" rx="2" fill="#7d858c" stroke="none"/><text x="1872" y="1434" font-family="Liberation Sans,sans-serif" font-size="17" font-weight="400" fill="#fff" stroke="#fff" stroke-width=".4" textLength="31" lengthAdjust="spacingAndGlyphs">ABC</text><path d="M1886 1437l6 8 12.500-15" stroke="#fff" stroke-width="2.600"/>`),
  sd(1931.5),
  icon(1956, 1417, 36, 37, `<path d="M1982 1423v-4h-24v33h24v-7M1962 1427h15M1962 1432h12M1962 1437h8M1962 1442.500h4"/><path d="M1972 1444l2-8 11.500-11.500 5 4.500-11 12z"/><path d="M1974 1436l5 4.500"/>`, '#444', 1.8),
  icon(2000, 1427, 16, 14, chev(2007, 1434)), sd(2039.5),
  icon(2069, 1417, 29, 36, `<path d="M2071 1419h25.500v31.500H2071zM2083.700 1421.500v8M2083.700 1440v8M2073.500 1434.700h6M2088 1434.700h6M2080.500 1425l3.200-3.500 3.200 3.500M2080.500 1444.500l3.200 3.500 3.200-3.500M2076.500 1431.500l-3 3.200 3 3.200M2091 1431.500l3 3.200-3 3.200"/>`, '#444', 1.7),
  icon(2133, 1423, 36, 24, `<path d="M2134.500 1423v23.500M2168 1423v23.500M2138 1434.700h26.500M2144 1428.500l-6 6.200 6 6.200M2158.500 1428.500l6 6.200-6 6.200"/>`, '#444', 1.8),
  icon(2206, 1432, 24, 6, `<path d="M2206.500 1435h23"/>`),
  text(2266, 1442.3, 142, 24.3, 'Zoom 100%'),
  icon(2439, 1423, 24, 24, `<path d="M2439.500 1434.700h23M2451 1423v23.500"/>`),
]));

/* ---------- dock ---------- */
const dot = x => `<circle cx="${x}" cy="1543" r="4.600" fill="#f5f5f5" stroke="none"/>`;
const di = (x, y, w, h, b) => icon(x, y, w, h, `<g stroke="none">${b}</g>`);
const calDots = () => { let s = ''; [[1521, 1], [1536, 0], [1551, 0]].forEach(([y, a], r) => { for (let c = a; c < (r === 2 ? 3 : 6); c++) s += `<circle cx="${596.3 + c * 10.5}" cy="${y}" r="2" fill="#bdbbb8"/>`; }); return s; };
define('dock-bar', `:host{height:139px;background:#3c3c3c;display:flex;align-items:flex-start}`, row(0, 1460, [
  di(40, 1503, 54, 54, [1509, 1530, 1551].map(y => [45.5, 66.5, 87.5].map(x => `<circle cx="${x}" cy="${y}" r="5.400" fill="#f5f5f5"/>`).join('')).join('')),
  di(137, 1490, 76, 78, `<defs><linearGradient id="fa" x1=".8" y1=".05" x2=".3" y2="1"><stop offset="0" stop-color="#fff34e"/><stop offset=".3" stop-color="#ffb72b"/><stop offset=".55" stop-color="#ff7a2c"/><stop offset=".78" stop-color="#ff3a45"/><stop offset="1" stop-color="#e5147f"/></linearGradient><linearGradient id="fb" x1=".6" y1="0" x2=".4" y2="1"><stop offset="0" stop-color="#c135dd"/><stop offset=".5" stop-color="#8447ea"/><stop offset="1" stop-color="#4a3fa5"/></linearGradient><linearGradient id="fc" x1=".7" y1="0" x2=".5" y2="1"><stop offset="0" stop-color="#ffee4c"/><stop offset=".6" stop-color="#ffb52a"/><stop offset="1" stop-color="#ff7b30"/></linearGradient><linearGradient id="fd" x1=".3" y1="0" x2=".6" y2="1"><stop offset="0" stop-color="#ff971c"/><stop offset=".5" stop-color="#ff7b25"/><stop offset="1" stop-color="#ff4a3c"/></linearGradient></defs>
   <path d="M152.400 1503C151.500 1507 152 1510 153.500 1512 155.500 1510.500 157.500 1509.700 159 1509.500 160 1507.500 161.500 1506 163 1505.300 162 1508.500 162.500 1511 164 1514L174 1512C174 1500 183 1498 186 1491 190 1498 197 1503 200.500 1513L203 1506.700C204.500 1511 207.500 1514 208.500 1518 215 1533 211 1550 199 1559.500 186 1570 164 1570 151 1559.500 138 1549 134.500 1532 141 1518 143.500 1512 147.500 1507 152.400 1503Z" fill="url(#fa)"/>
   <path d="M139 1540c4 28 54 36 71 0 0 36-67 38-71 0z" fill="#e4137f" opacity=".75"/>
   <ellipse cx="174.500" cy="1528.500" rx="16" ry="17.500" fill="url(#fb)"/>
   <path d="M174 1512C174 1500 183 1498 186 1491 190 1499 198 1503 201 1514 205 1526 203 1540 194 1547 196 1537 193 1520 183 1518.500 185 1518 188 1519 190 1520 186 1515 181 1512 174 1512Z" fill="url(#fc)"/>
   <path d="M143 1519c6-6 12-8 19-5 2 4 6 7 9 8 2 .7 4 .7 4 2-2 3-6 3.500-10 5-6 1.500-8 6-5 12 5 8 16 10 25 3-4 10-20 13-30 4-7-6-10-16-12-29z" fill="url(#fd)"/><path d="M148 1523c4-3 9-3 14-1l9 1c2 0 3 .5 3.500 1.200-3 2.500-7 3-10 4.300-5 1-10 1-16.500-5.500z" fill="#ffa21f"/>` + dot(174).replace('r="4.600"', 'r="4.800"')),
  di(258, 1493, 58, 74, `<rect x="258" y="1493" width="58" height="74" rx="5" fill="#dedddb"/><rect x="258" y="1493" width="58" height="71" rx="5" fill="#f8f8f7"/><rect x="260.500" y="1496" width="53" height="65.500" rx="2.500" fill="#3584e4"/><path d="M260.500 1516.700h53v1.500h-53zM260.500 1537.700h53v1.500h-53z" fill="#1c6ed8"/>` + [1504, 1525, 1546].map(y => `<path d="M279.500 ${y + 5.5}v-3.500a2 2 0 0 1 2-2h12a2 2 0 0 1 2 2v3.500h-3v-2h-10v2z" fill="#deddda"/><path d="M282.500 ${y + 3.5}h10v2h-10z" fill="#2165b6"/>`).join('')),
  di(362, 1493, 74, 71, `<path d="M388 1507v-9l3-3.500h17l3 3.500v9" fill="none" stroke="#f5f4f2" stroke-width="4"/><path d="M391.500 1493.500h15.500v5h-15.500z" fill="#c0bfbc"/><path d="M362 1506h73.500v53a5 5 0 0 1-5 5h-63.500a5 5 0 0 1-5-5z" fill="#deddda"/><path d="M362 1532h73.500v23a5 5 0 0 1-5 4h-63.500a5 5 0 0 1-5-4z" fill="#f6f5f4"/><path d="M362 1506h73.500v27H362z" fill="#e3e3df"/>
   <defs><linearGradient id="sa"><stop offset="0" stop-color="#ed3b7b"/><stop offset="1" stop-color="#fd9a4a"/></linearGradient><linearGradient id="sb" x2="0" y2="1"><stop offset="0" stop-color="#5553e4"/><stop offset="1" stop-color="#b964d2"/></linearGradient><linearGradient id="sc"><stop offset="0" stop-color="#36d3cf"/><stop offset="1" stop-color="#2a4fd0"/></linearGradient></defs>
   <rect x="380" y="1525" width="16" height="16" rx="4.500" fill="url(#sa)"/><circle cx="406.700" cy="1522" r="8" fill="url(#sb)"/><path d="M414.700 1535.500v15q0 2-2 1.200l-3.500-1.700-7.400-5.500v-3l7.400-5.500 3.500-1.700q2-.8 2 1.200z" fill="url(#sc)"/>`),
  di(482, 1493, 66, 74, `<rect x="482" y="1497" width="57.500" height="70" rx="5" fill="#1a5fb4"/><rect x="482" y="1497" width="57.500" height="68" rx="5" fill="#dcdbd8"/><rect x="482" y="1497" width="57.500" height="66" rx="4" fill="#f6f5f4"/><path d="M482 1504v-6a5 5 0 0 1 5-5h47.500a5 5 0 0 1 5 5v6z" fill="#3584e4"/><path d="M487 1509h37v13h-24v4h-13zM487 1530h47v8h-14v4h-33z" fill="#deddda"/><path d="M526.500 1561v-5a6 6 0 0 1 5-5l8-2z" fill="#fff"/>
   <path d="M494.500 1541l36-37 11 9.500-36 37-10.500 1z" fill="#ff8c1f"/><path d="M494.500 1541l36-37 3.500 3-36 37z" fill="#ffb067"/><path d="M502 1548l36-37.500 3.500 3-36 37z" fill="#ed6a00"/><path d="M494.500 1541l-1 10.500 12-1.500-4-4.500-3-1z" fill="#f3d9b4"/><path d="M494.300 1545l-.8 6.500 5.500-1z" fill="#241f31"/><path d="M530.500 1504l4-4 11 9.500-4 4z" fill="#c0bfbc"/><path d="M534.500 1500c5-5.500 17 1 11 9.500z" fill="#e0414f"/>` + dot(510)),
  di(588, 1496, 69, 70, `<rect x="588.500" y="1500" width="68.500" height="65" rx="5" fill="#813d9c"/><rect x="588.500" y="1500" width="68.500" height="63.500" rx="5" fill="#c9c7c4"/><rect x="588.500" y="1500" width="68.500" height="60" rx="4" fill="#fcfcfb"/><path d="M588.500 1511.500v-10a5 5 0 0 1 5-5h58.500a5 5 0 0 1 5 5v10z" fill="#9141ac"/>${calDots()}<circle cx="617.300" cy="1536" r="5.200" fill="#9141ac"/>`),
  [686, 1488, 1.5, `<div style="height:84px;background:#585858"></div>`],
  di(708, 1488, 84, 84, `<defs><clipPath id="cc"><circle cx="750" cy="1530" r="42"/></clipPath></defs><g clip-path="url(#cc)"><path d="M708 1488h84v84h-84z" fill="#aecbfa"/><path d="M708 1488h84v21h-42l-18.500 33-18-33z" fill="#1967d2"/><path d="M713.500 1509l18.500 31.500 18 12 16.500-10.500-16.500 32h-45v-65z" fill="#669df6"/></g><circle cx="750" cy="1530" r="21" fill="#fff"/><circle cx="750" cy="1530" r="17" fill="#1a73e8"/>` + dot(749)),
  di(810, 1477, 105, 106, `<rect x="810" y="1477.500" width="104.500" height="105" rx="26" fill="#606060"/><path d="M820 1548.500l14-7 28 13 28-13 14 7q.5 2-2 3.500l-35 16.500q-5 2-10 0l-35-16.500q-2.500-1.500-2-3.500z" fill="#ff6f3d"/><path d="M820 1528.500l14-7 22.500 10.500q5.500 2.500 11 0l22.500-10.500 14 7q.5 2-2 3.500l-35 16.500q-5 2-10 0l-35-16.500q-2.500-1.500-2-3.500z" fill="#95c038"/><path d="M822 1508.500l35-16.500q5-2 10 0l35 16.500q3.500 1.800 0 3.500l-35 16.500q-5 2-10 0l-35-16.500q-3.500-1.700 0-3.500z" fill="#5dc0e8"/>` + dot(861)),
  di(940, 1496, 68, 68, `<path d="M940 1544h68v15.500a4.500 4.500 0 0 1-4.500 4.500h-59a4.500 4.500 0 0 1-4.500-4.500z" fill="#f6f5f4"/><path d="M943 1552h62l2 3v4a3.500 3.500 0 0 1-3.500 3.500h-59a3.500 3.500 0 0 1-3.500-3.500v-4z" fill="#dad9d6"/><path d="M940 1544v-43.500a4.500 4.500 0 0 1 4.500-4.500h59a4.500 4.500 0 0 1 4.500 4.500v43.500z" fill="#ffa348"/><rect x="946.500" y="1556" width="55" height="3" rx="1" fill="#5e5c64"/>`),
  di(1054, 1493, 64, 72, `<rect x="1055.500" y="1505" width="61" height="59" rx="4" fill="#26a269"/><rect x="1057" y="1505" width="58.500" height="57.500" rx="4" fill="#2ec27e"/><rect x="1054.300" y="1493" width="63" height="26" rx="4.500" fill="#deddda"/><rect x="1054.300" y="1493" width="63" height="22" rx="4.500" fill="#f6f5f4"/><rect x="1057" y="1496" width="57.500" height="15.500" rx="2.500" fill="#9a9996"/><path d="M1070 1511.500l9-6 3-5 5-2 9 6 12 2v4l-9 1z" fill="#d8d7d5"/><path d="M1084 1500l9 9-10 2.500z" fill="#f6f5f4"/>
   <g fill="#fff">${[0, 120, 240].map(a => `<path transform="rotate(${a} 1086 1542)" d="M1076.500 1533l4-6q1.500-1.500 3.500-1.500h6q2 0 3.500 2l1.500 2.500 3-1.500-3.500 9h-9l2.500-2-3-5-2.500 6z"/>`).join('')}</g>`),
]));

/* ---------- desktop ---------- */
define('office-desktop', `:host{width:2559px;height:1599px;display:flex;flex-direction:column;overflow:hidden}.main{display:flex;height:1020px;flex:none}system-bar,window-bar,app-header,tool-ribbon,status-bar,dock-bar{flex:none}left-rail{flex:none}`,
`<system-bar></system-bar><window-bar></window-bar><app-header></app-header><tool-ribbon></tool-ribbon>
<div class="main"><left-rail></left-rail><doc-canvas></doc-canvas><settings-panel></settings-panel><right-rail></right-rail></div>
<status-bar></status-bar><dock-bar></dock-bar>`);
</script>
</body>
</html>
